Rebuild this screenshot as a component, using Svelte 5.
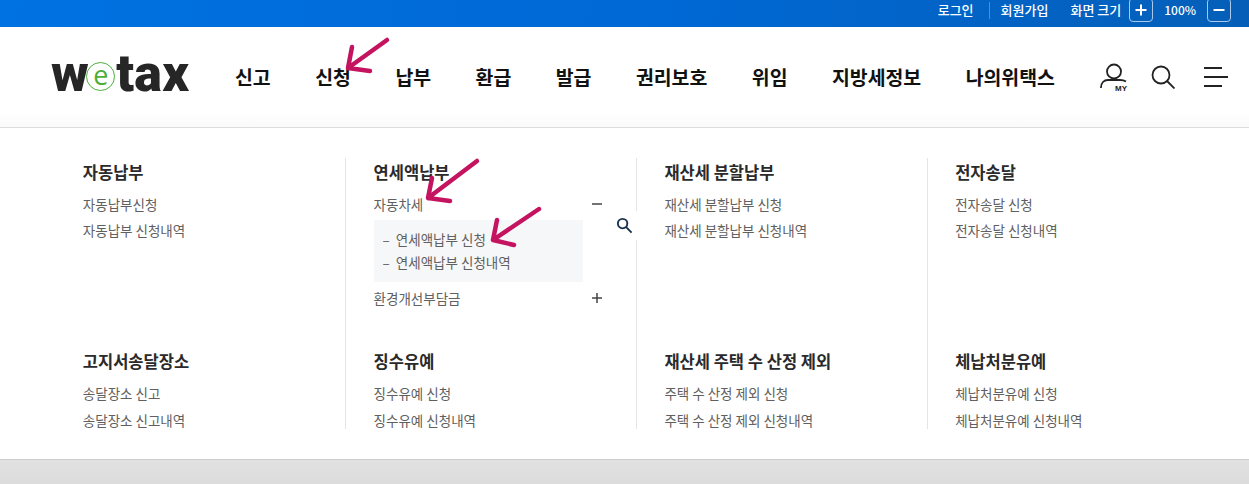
<script>
  const nav = ["신고", "신청", "납부", "환급", "발급", "권리보호", "위임", "지방세정보", "나의위택스"];

  const rows = [
    [
      { title: "자동납부", links: ["자동납부신청", "자동납부 신청내역"] },
      { title: "연세액납부", tree: true },
      { title: "재산세 분할납부", links: ["재산세 분할납부 신청", "재산세 분할납부 신청내역"] },
      { title: "전자송달", links: ["전자송달 신청", "전자송달 신청내역"] }
    ],
    [
      { title: "고지서송달장소", links: ["송달장소 신고", "송달장소 신고내역"] },
      { title: "징수유예", links: ["징수유예 신청", "징수유예 신청내역"] },
      { title: "재산세 주택 수 산정 제외", links: ["주택 수 산정 제외 신청", "주택 수 산정 제외 신청내역"] },
      { title: "체납처분유예", links: ["체납처분유예 신청", "체납처분유예 신청내역"] }
    ]
  ];

  // annotation arrows, page coordinates
  const arrows = [
    "M387 40L348 68M352 47L348 68L370 71",
    "M477 161L428 198M432 178L428 198L450 201",
    "M539 209L493 240M497 220L493 240L514 245"
  ];
</script>

<div class="page">
  <div class="topbar">
    <a class="login">로그인</a>
    <span class="sep"></span>
    <a class="join">회원가입</a>
    <span class="zoom-label">화면 크기</span>
    <span class="zoom-btn">
      <svg width="12" height="12" viewBox="0 0 12 12"><path d="M6 0.5v11M0.5 6h11" stroke="#fff" stroke-width="2" /></svg>
    </span>
    <span class="pct">100%</span>
    <span class="zoom-btn">
      <svg width="12" height="12" viewBox="0 0 12 12"><path d="M0.5 6h11" stroke="#fff" stroke-width="2" /></svg>
    </span>
  </div>

  <header class="header">
    <div class="logo"><span class="w">w</span><span class="logo-e">e</span><span class="tax">tax</span></div>
    <nav class="nav">
      {#each nav as item}
        <a>{item}</a>
      {/each}
    </nav>
    <div class="tools">
      <svg class="my" width="30" height="30" viewBox="0 0 30 30" fill="none" stroke="#222" stroke-width="1.8">
        <circle cx="14" cy="9.5" r="7" />
        <path d="M0.9 26C0.9 21 4 18 8 18H20C22.5 18 24.5 18.500 26 19.500" />
        <text x="15" y="29" stroke="none" fill="#222">MY</text>
      </svg>
      <svg width="24" height="24" viewBox="0 0 24 24" fill="none" stroke="#222" stroke-width="1.8">
        <circle cx="10" cy="10" r="8.500" />
        <path d="M16 16l7.500 7.500" />
      </svg>
      <svg class="burger" width="24" height="22" viewBox="0 0 24 22" fill="none" stroke="#222" stroke-width="2">
        <path d="M0 2h18M0 11h24M0 20h18" />
      </svg>
    </div>
  </header>

  <section class="mega">
    {#each rows as row}
      <div class="row">
        {#each row as col}
          <div class="col">
            <h3>{col.title}</h3>
            {#if col.tree}
              <div class="tree">
                <div class="tree-head">
                  <span>자동차세</span>
                  <svg width="10" height="10" viewBox="0 0 10 10"><path d="M0 5h10" stroke="#444" stroke-width="1.500" /></svg>
                </div>
                <ul class="sub">
                  <li>연세액납부 신청</li>
                  <li>연세액납부 신청내역</li>
                </ul>
                <div class="tree-head second">
                  <span>환경개선부담금</span>
                  <svg width="10" height="10" viewBox="0 0 10 10"><path d="M0 5h10M5 0v10" stroke="#444" stroke-width="1.500" /></svg>
                </div>
              </div>
              <span class="finder">
                <svg width="17" height="17" viewBox="0 0 18 18" fill="none" stroke="#16324f" stroke-width="2">
                  <circle cx="7" cy="7" r="5" />
                  <path d="M10.500 10.500l6 6" />
                </svg>
              </span>
            {:else}
              <ul class="links">
                {#each col.links as link}
                  <li>{link}</li>
                {/each}
              </ul>
            {/if}
          </div>
        {/each}
      </div>
    {/each}
  </section>

  <div class="below"></div>

  <svg class="arrows" width="1249" height="484" fill="none" stroke="#c4145f" stroke-width="4.500" stroke-linecap="round" stroke-linejoin="round">
    {#each arrows as d}
      <path {d} />
    {/each}
  </svg>
</div>

<style>
  :global(body) {
    margin: 0;
    background: #ddd;
  }

  .page {
    position: relative;
    width: 1249px;
    height: 484px;
    overflow: hidden;
    font-family: "Noto Sans CJK KR", "Noto Sans", sans-serif;
  }

  .topbar {
    height: 27px;
    box-sizing: border-box;
    padding: 0 18px 7px 0;
    display: flex;
    align-items: center;
    justify-content: flex-end;
    background: linear-gradient(95deg, #0072e2, #0068d4 55%, #055fb8);
    color: #fff;
    font-size: 13px;
    font-weight: 500;
    line-height: 20px;
  }

  .sep {
    width: 1px;
    height: 17px;
    margin: 0 11px 0 15px;
    background: #4d8fd3;
  }

  .zoom-label {
    margin-left: 22px;
    margin-right: 8px;
  }

  .pct {
    margin: 0 11px;
    font-size: 12px;
  }

  .zoom-btn {
    width: 24px;
    height: 24px;
    flex: none;
    box-sizing: border-box;
    border: 1px solid #a9c8ea;
    border-radius: 4px;
    display: flex;
    align-items: center;
    justify-content: center;
  }

  .header {
    height: 100px;
    box-sizing: border-box;
    display: flex;
    align-items: center;
    background: linear-gradient(#fff 85%, #fafafa);
    padding-left: 51px;
  }

  .logo {
    width: 184px;
    height: 40px;
    margin-top: -6px;
    font-family: Roboto, sans-serif;
    font-size: 52px;
    font-weight: 900;
    color: #262626;
    line-height: 40px;
    display: flex;
    align-items: center;
  }

  .w {
    letter-spacing: -2.500px;
  }

  .tax {
    letter-spacing: 0.200px;
  }

  .logo-e {
    width: 29px;
    height: 29px;
    flex: none;
    margin: 5px 1px 0 0;
    box-sizing: border-box;
    border: 1.500px solid #4caf3a;
    border-radius: 50%;
    color: #4caf3a;
    font-family: "Open Sans", sans-serif;
    font-size: 27px;
    font-weight: 400;
    line-height: 23px;
    text-align: center;
  }

  .nav {
    display: flex;
    gap: 44.500px;
    margin-top: -1px;
    font-size: 19.400px;
    font-weight: 700;
    color: #111;
    white-space: nowrap;
  }

  .tools {
    display: flex;
    align-items: center;
    gap: 21px;
    margin-left: 45px;
  }

  .tools .burger {
    margin-left: 8px;
  }

  .tools .my text {
    font-size: 8px;
    font-weight: 700;
    font-family: "Liberation Sans", sans-serif;
  }

  .mega {
    height: 333px;
    box-sizing: border-box;
    padding: 30px 0 0 55.300px;
    background: #fff;
    border-top: 1px solid #ddd;
    border-bottom: 1px solid #ccc;
  }

  .row {
    display: flex;
  }

  .col {
    position: relative;
    width: 290.800px;
    height: 189px;
    box-sizing: border-box;
    padding: 3px 0 0 27.500px;
    border-right: 1px solid #e4e4e4;
  }

  .row:last-child .col {
    height: 82px;
  }

  .col:last-child {
    border-right: 0;
  }

  h3 {
    margin: 0 0 8px;
    font-size: 16.500px;
    line-height: 22px;
    font-weight: 700;
    color: #2a2a2a;
  }

  ul {
    list-style: none;
    margin: 0;
    padding: 0;
  }

  .links li {
    font-size: 13.500px;
    line-height: 26px;
    color: #606060;
  }

  .row:last-child .links li {
    line-height: 27px;
  }

  .tree {
    width: 228.500px;
    font-size: 13.500px;
    color: #606060;
  }

  .tree-head {
    display: flex;
    align-items: center;
    justify-content: space-between;
    height: 26px;
  }

  .second {
    margin-top: 3px;
  }

  .sub {
    width: 209px;
    margin-top: 3px;
    padding: 8px 9px;
    box-sizing: border-box;
    background: #f6f7f9;
  }

  .sub li {
    line-height: 23px;
  }

  .sub li::before {
    content: "–";
    margin-right: 6px;
  }

  .finder {
    position: absolute;
    left: 265px;
    top: 53px;
    width: 27px;
    height: 29px;
    display: flex;
    align-items: center;
    justify-content: center;
    background: #fff;
  }

  .below {
    height: 24px;
    background: linear-gradient(#e1e1e1, #dcdcdc);
  }

  .arrows {
    position: absolute;
    left: 0;
    top: 0;
  }
</style>
